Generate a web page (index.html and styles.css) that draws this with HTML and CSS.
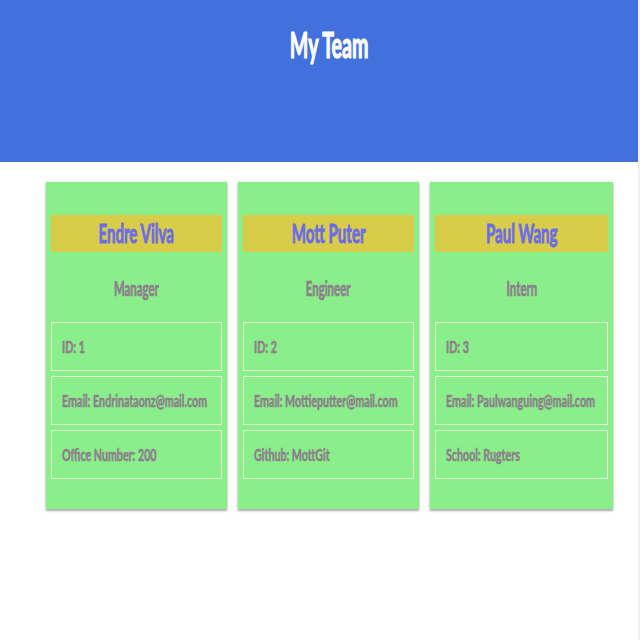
FILE: index.html
```html
<!DOCTYPE html>
<html lang="en">
<head>
<meta charset="utf-8">
<title>My Team</title>
<link rel="stylesheet" href="styles.css">
</head>
<body>
<div class="page">
  <header class="hero">
    <h1 class="title"><span class="sq">My Team</span></h1>
  </header>
  <main class="team">
    <section class="card">
      <h2 class="name"><span class="sq">Endre Vilva</span></h2>
      <h3 class="role"><span class="sq">Manager</span></h3>
      <ul class="facts">
        <li class="fact"><span class="sq">ID: 1</span></li>
        <li class="fact"><span class="sq">Email: Endrinataonz@mail.com</span></li>
        <li class="fact"><span class="sq">Office Number: 200</span></li>
      </ul>
    </section>
    <section class="card">
      <h2 class="name"><span class="sq">Mott Puter</span></h2>
      <h3 class="role"><span class="sq">Engineer</span></h3>
      <ul class="facts">
        <li class="fact"><span class="sq">ID: 2</span></li>
        <li class="fact"><span class="sq">Email: Mottieputter@mail.com</span></li>
        <li class="fact"><span class="sq">Github: MottGit</span></li>
      </ul>
    </section>
    <section class="card">
      <h2 class="name"><span class="sq">Paul Wang</span></h2>
      <h3 class="role"><span class="sq">Intern</span></h3>
      <ul class="facts">
        <li class="fact"><span class="sq">ID: 3</span></li>
        <li class="fact"><span class="sq">Email: Paulwanguing@mail.com</span></li>
        <li class="fact"><span class="sq">School: Rugters</span></li>
      </ul>
    </section>
  </main>
</div>
</body>
</html>
```

FILE: styles.css
```css
html {
  background: #f0f0f0;
}

body {
  margin: 0;
  font-family: Lato, "Open Sans", sans-serif;
  font-weight: 700;
}

.page {
  width: 638px;
  min-height: 640px;
  background: #ffffff;
}

.sq {
  display: inline-block;
  white-space: nowrap;
  transform: scaleX(var(--sx, 0.55));
  transform-origin: center center;
  -webkit-text-stroke: var(--stroke, 0.6px) currentColor;
}

.hero {
  box-sizing: border-box;
  height: 162px;
  background: #4270dc;
  padding: 25px 0 0 20px;
  display: flex;
  justify-content: center;
  align-items: flex-start;
}

.title {
  --sx: 0.53;
  --stroke: 1.2px;
  margin: 0;
  font-size: 37px;
  line-height: 1;
  color: #ffffff;
}

.team {
  display: flex;
  gap: 11px;
  padding: 20px 0 0 46px;
}

.card {
  box-sizing: border-box;
  width: 181px;
  height: 327px;
  padding: 33px 5px 30px;
  background: #8aee8a;
  box-shadow: 0 2px 2px rgba(0, 0, 0, 0.3), 0 0 3px rgba(0, 0, 0, 0.15);
  display: flex;
  flex-direction: column;
}

.card:last-child {
  width: 183px;
}

.name {
  --sx: 0.58;
  --stroke: 0.9px;
  margin: 0;
  height: 37px;
  background: #d8cc48;
  color: #6c6ce4;
  font-size: 26px;
  line-height: 37px;
  text-align: center;
}

.role {
  --sx: 0.57;
  --stroke: 0.7px;
  margin: 0;
  padding-top: 2px;
  font-size: 20px;
  line-height: 68px;
  color: #8c7f8c;
  text-align: center;
}

.facts {
  list-style: none;
  margin: 0;
  padding: 0;
  display: flex;
  flex-direction: column;
  gap: 5px;
}

.fact {
  --sx: 0.61;
  --stroke: 0.6px;
  box-sizing: border-box;
  height: 49px;
  border: 1px solid #dcf7d6;
  padding-left: 10px;
  display: flex;
  align-items: center;
  font-size: 17.5px;
  color: #8c7f8c;
}

.fact .sq {
  transform-origin: left center;
}
```
